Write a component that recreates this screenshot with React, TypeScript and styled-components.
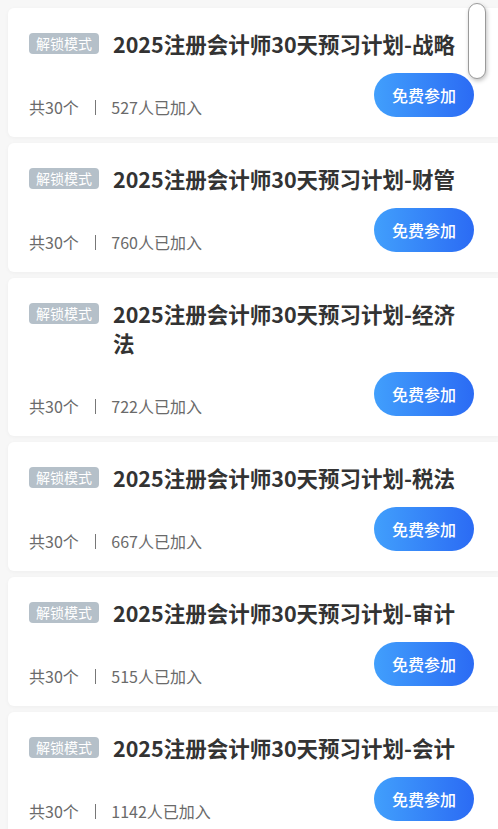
import React from "react";
import styled, { createGlobalStyle } from "styled-components";

const GlobalStyle = createGlobalStyle`
  html, body {
    margin: 0;
    padding: 0;
    background: #f7f7f7;
    font-family: "Noto Sans CJK SC", "Noto Sans", sans-serif;
  }
`;

const plans = [
  { subject: "战略", joined: 527 },
  { subject: "财管", joined: 760 },
  { subject: "经济法", joined: 722 },
  { subject: "税法", joined: 667 },
  { subject: "审计", joined: 515 },
  { subject: "会计", joined: 1142 },
];

const App = () => {
  return (
    <>
      <GlobalStyle />
      <List>
        {plans.map((plan) => (
          <Card key={plan.subject}>
            <Head>
              <Badge>解锁模式</Badge>
              <Title>2025注册会计师30天预习计划-{plan.subject}</Title>
            </Head>
            <Foot>
              <Meta>
                共30个<Divider />
                {plan.joined}人已加入
              </Meta>
              <JoinButton>免费参加</JoinButton>
            </Foot>
          </Card>
        ))}
      </List>
      <ScrollThumb />
    </>
  );
};

const List = styled.div`
  display: flex;
  flex-direction: column;
  gap: 6px;
  padding-top: 8px;
`;

const Card = styled.div`
  margin-left: 8px;
  padding: 21px 24px 20px 21px;
  background: #fff;
  border-radius: 6px 0 0 6px;
  box-shadow: 0 1px 4px rgba(0, 0, 0, 0.04);
`;

const Head = styled.div`
  display: flex;
  align-items: flex-start;
`;

const Badge = styled.span`
  flex-shrink: 0;
  height: 21px;
  line-height: 21px;
  margin-top: 4px;
  margin-right: 14px;
  padding: 0 7px;
  border-radius: 4px;
  background: #b5c0c9;
  color: #fff;
  font-size: 14px;
`;

const Title = styled.div`
  font-size: 21.5px;
  line-height: 29px;
  font-weight: 700;
  color: #333;
`;

const Foot = styled.div`
  display: flex;
  align-items: flex-end;
  justify-content: space-between;
  margin-top: 15px;
`;

const Meta = styled.div`
  display: flex;
  align-items: center;
  font-size: 16px;
  line-height: 20px;
  color: #6a6a6a;
`;

const Divider = styled.span`
  width: 1.5px;
  height: 15px;
  margin: 0 15px 0 16px;
  background: #777;
`;

const JoinButton = styled.button`
  width: 100px;
  height: 44px;
  border: none;
  border-radius: 22px;
  background: linear-gradient(90deg, #419ffc, #2b6bf4);
  color: #fff;
  font-family: inherit;
  font-size: 16px;
  font-weight: 500;
  padding: 0;
`;

const ScrollThumb = styled.div`
  position: fixed;
  top: 3px;
  left: 468px;
  width: 16px;
  height: 74px;
  border: 1.5px solid #9a9a9a;
  border-radius: 10px;
  background: #fff;
  box-shadow: 1px 2px 4px rgba(0, 0, 0, 0.25);
`;

export default App;
